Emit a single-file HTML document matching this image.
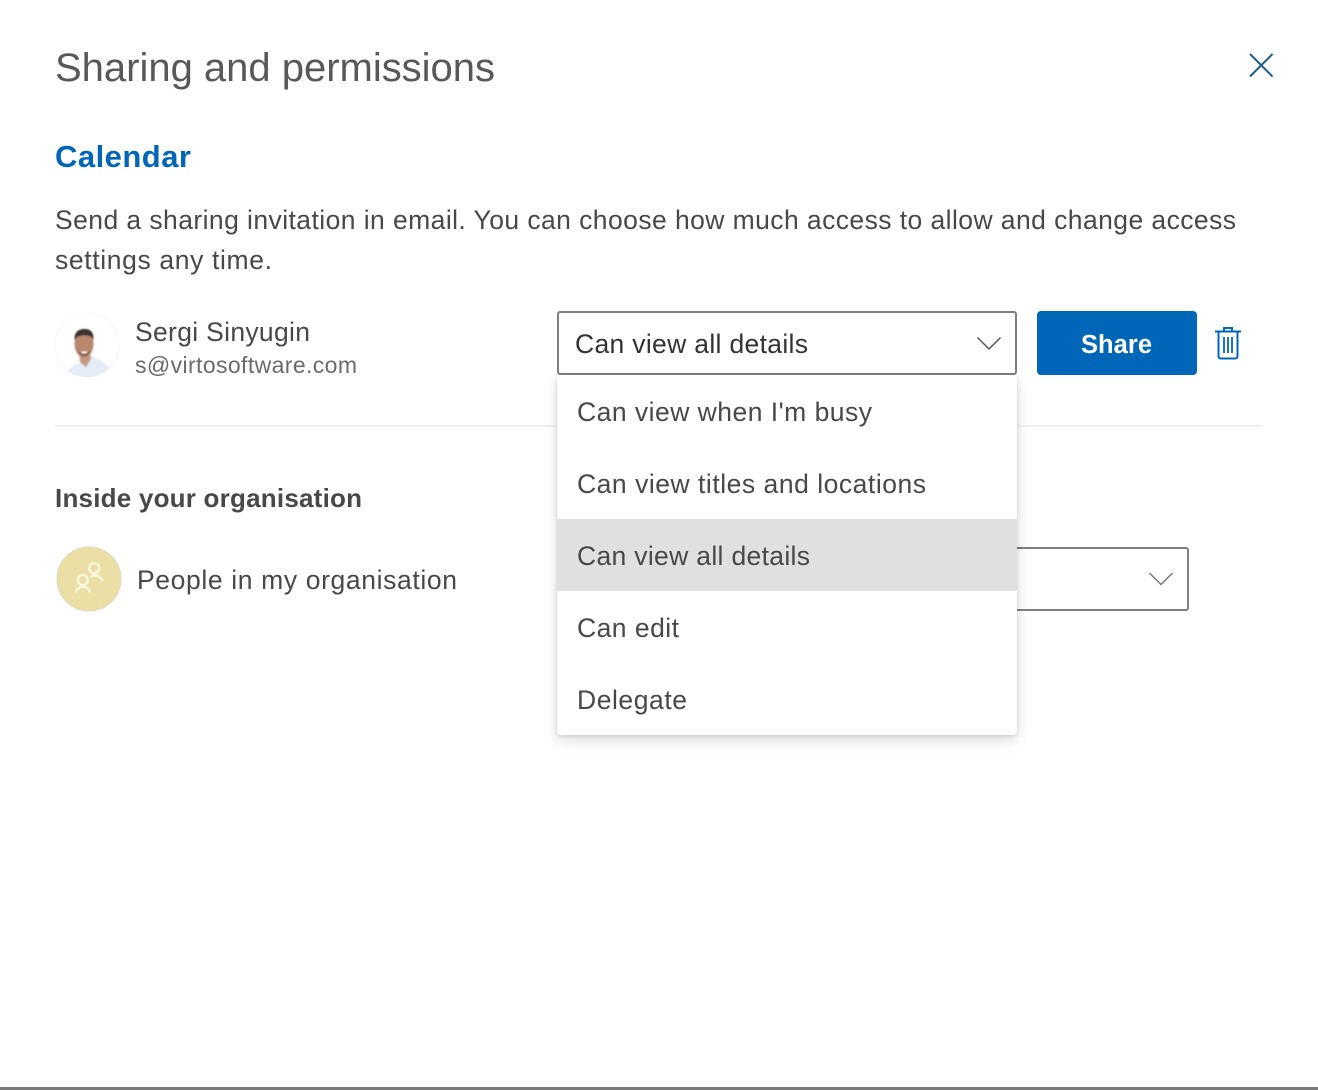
<!DOCTYPE html>
<html lang="en">
<head>
<meta charset="utf-8">
<title>Sharing and permissions</title>
<style>
html,body{margin:0;padding:0;background:#fff}
body{position:relative;width:1318px;height:1090px;overflow:hidden;font-family:"Liberation Sans",sans-serif}
.a{position:absolute;box-sizing:border-box}
svg{position:absolute;left:0;top:0}
text{font-family:"Liberation Sans",sans-serif;fill:#484848}
</style>
</head>
<body>
<div class="a" style="left:55px;top:425px;width:1207px;height:2px;background:#f0f0f0"></div>
<div class="a" style="left:557px;top:547px;width:632px;height:64px;border:2px solid #7f7f7f;border-radius:3px"></div>
<div class="a" style="left:557px;top:311px;width:460px;height:64px;border:2px solid #7f7f7f;border-radius:3px"></div>
<div class="a" style="left:1037px;top:311px;width:160px;height:64px;background:#0067b8;border-radius:4px"></div>
<div class="a" style="left:557px;top:375px;width:460px;height:360px;background:#fff;border-radius:0 0 4px 4px;box-shadow:0 6px 14px rgba(0,0,0,.13),0 1px 4px rgba(0,0,0,.12)"></div>
<div class="a" style="left:557px;top:519px;width:460px;height:72px;background:#e0e0e0"></div>
<div class="a" style="left:0;top:1087px;width:1318px;height:3px;background:#7a7a7a"></div>

<svg width="1318" height="1090" viewBox="0 0 1318 1090">
  <defs>
    <clipPath id="av"><circle cx="87" cy="345" r="32"/></clipPath>
    <filter id="bl" x="-20%" y="-20%" width="140%" height="140%"><feGaussianBlur stdDeviation="0.7"/></filter>
  </defs>

  <text x="55" y="81" font-size="40" textLength="440" lengthAdjust="spacing" style="fill:#585858">Sharing and permissions</text>
  <text x="55" y="167" font-size="31" font-weight="700" textLength="136" lengthAdjust="spacing" style="fill:#0067b8">Calendar</text>
  <text x="55" y="229" font-size="26.5" textLength="1181" lengthAdjust="spacing">Send a sharing invitation in email. You can choose how much access to allow and change access</text>
  <text x="55" y="269" font-size="26.5" textLength="217" lengthAdjust="spacing">settings any time.</text>

  <circle cx="87" cy="345" r="32" fill="#fff" stroke="#f6f6f6" stroke-width="1"/>
  <g clip-path="url(#av)" filter="url(#bl)">
    <path d="M65 376 C69 367 76 364 84 360 L92 356 C98 360 106 362 110 370 L104 378 L70 378 Z" fill="#e4ecf6"/>
    <path d="M79 350 L80 362 L86 367 L91 359 L90 350 Z" fill="#c29a80"/>
    <ellipse cx="84" cy="344" rx="9.5" ry="13.5" fill="#b9876c"/>
    <path d="M74.5 340 C74 331 80 328.5 85 329 C91 329 94 333 93.5 340 C91.5 336 89 335.5 85 335.5 C80 335.5 77 336 74.5 340 Z" fill="#3b3330"/>
    <path d="M78 350 C80 358 88 358 91 350 C89 352.5 87 352 84 352 C81 352 80 352.5 78 350 Z" fill="#7a5a4a"/>
    <path d="M80.5 351.5 L88 351.5 L86 353.5 L82 353.5 Z" fill="#f4ece6"/>
  </g>

  <text x="135" y="341" font-size="26.5" textLength="175" lengthAdjust="spacing">Sergi Sinyugin</text>
  <text x="135" y="373" font-size="23" textLength="222" lengthAdjust="spacing" style="fill:#6a6a6a">s@virtosoftware.com</text>

  <text x="575" y="353" font-size="26.5" textLength="233" lengthAdjust="spacing" style="fill:#333">Can view all details</text>
  <path d="M977.5 337.5 L989 349 L1000.5 337.5" fill="none" stroke="#555" stroke-width="1.5"/>

  <text x="1081" y="353" font-size="25.5" font-weight="700" textLength="71" lengthAdjust="spacing" style="fill:#fff">Share</text>

  <g fill="none" stroke="#0067b8" stroke-width="2">
    <path d="M1215 331.5 H1241"/>
    <path d="M1224 331 V328 H1232 V331"/>
    <path d="M1218.5 332 V356 Q1218.5 358.5 1221 358.5 H1235 Q1237.5 358.5 1237.5 356 V332"/>
    <path d="M1224 337 V353 M1228 337 V353 M1232 337 V353" stroke-width="1.8"/>
  </g>

  <path d="M1250 54 L1272.5 76.5 M1272.5 54 L1250 76.5" fill="none" stroke="#1a5a8a" stroke-width="2"/>

  <text x="577" y="421" font-size="26.5" textLength="295" lengthAdjust="spacing">Can view when I'm busy</text>
  <text x="577" y="493" font-size="26.5" textLength="349" lengthAdjust="spacing">Can view titles and locations</text>
  <text x="577" y="565" font-size="26.5" textLength="233" lengthAdjust="spacing">Can view all details</text>
  <text x="577" y="637" font-size="26.5" textLength="102" lengthAdjust="spacing">Can edit</text>
  <text x="577" y="709" font-size="26.5" textLength="110" lengthAdjust="spacing">Delegate</text>

  <text x="55" y="507" font-size="26" font-weight="700" textLength="307" lengthAdjust="spacing">Inside your organisation</text>

  <circle cx="89" cy="579" r="32" fill="#ecdfa6" stroke="#dcd9bd" stroke-width="1"/>
  <g fill="none" stroke="#fdf9e6" stroke-width="2.2">
    <circle cx="94.3" cy="568.3" r="5"/>
    <circle cx="82.8" cy="580" r="5"/>
    <path d="M76 592.5 C77 585 89 585 90 592.5"/>
    <path d="M90.5 577 C94 574 100 575 102.5 581"/>
  </g>
  <text x="137" y="589" font-size="26.5" textLength="320" lengthAdjust="spacing">People in my organisation</text>
  <path d="M1149.5 573 L1161 584.5 L1172.5 573" fill="none" stroke="#777" stroke-width="1.5"/>
</svg>
</body>
</html>
